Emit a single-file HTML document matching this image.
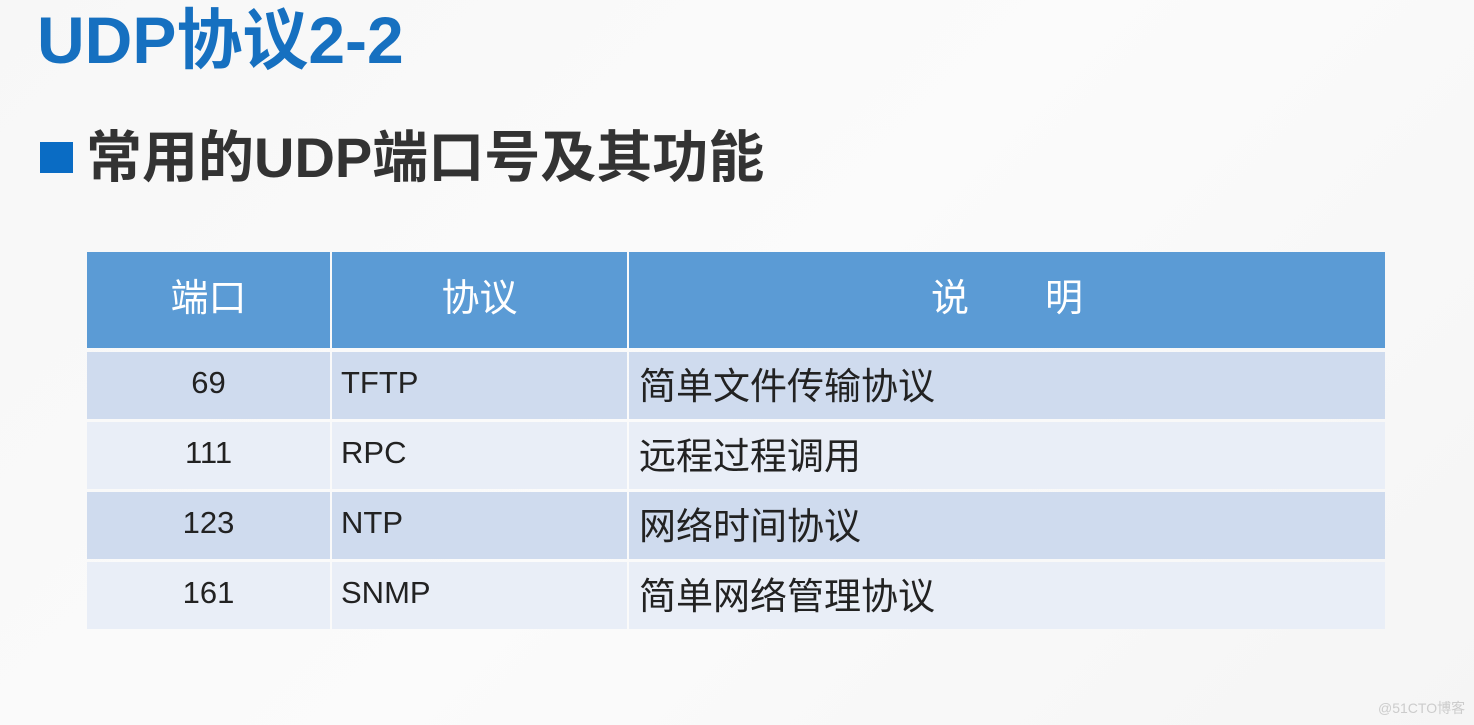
<!DOCTYPE html>
<html><head><meta charset="utf-8"><style>
body{margin:0;width:1474px;height:725px;background:linear-gradient(135deg,#f7f7f7,#fbfbfb 50%,#f5f5f5);position:relative;overflow:hidden;font-family:"Liberation Sans","Noto Sans CJK SC",sans-serif}
.t{position:absolute;left:37px;top:-2px;font-size:66px;font-weight:bold;color:#1670c0;white-space:nowrap;line-height:1.3}
.sq{position:absolute;left:40px;top:142px;width:33px;height:31px;background:#0a6cc4}
.s{position:absolute;left:86px;top:122px;font-size:56px;font-weight:bold;color:#333;white-space:nowrap;line-height:1.3}
.c{position:absolute;box-sizing:border-box;display:flex;align-items:center;font-size:31px;color:#222;white-space:nowrap;padding-bottom:6px}
.c span{font-size:37px}
.h{background:#5b9bd5;color:#fff;justify-content:center;font-size:38px;padding-bottom:12px}
.wm{position:absolute;left:1378px;top:698px;font-size:14px;color:#ccc}
</style></head><body>
<div class="t">UDP协议2-2</div>
<div class="sq"></div>
<div class="s">常用的UDP端口号及其功能</div>
<div class="c h" style="left:87px;top:252px;width:243px;height:96px">端口</div>
<div class="c h" style="left:332px;top:252px;width:295px;height:96px">协议</div>
<div class="c h" style="left:629px;top:252px;width:756px;height:96px">说&emsp;&emsp;明</div>

<div class="c" style="left:87px;top:352px;width:243px;height:67px;background:#cfdbee;justify-content:center">69</div>
<div class="c" style="left:332px;top:352px;width:295px;height:67px;background:#cfdbee;padding-left:9px">TFTP</div>
<div class="c" style="left:629px;top:352px;width:756px;height:67px;background:#cfdbee;padding-left:10px"><span>简单文件传输协议</span></div>

<div class="c" style="left:87px;top:422px;width:243px;height:67px;background:#e9eef7;justify-content:center">111</div>
<div class="c" style="left:332px;top:422px;width:295px;height:67px;background:#e9eef7;padding-left:9px">RPC</div>
<div class="c" style="left:629px;top:422px;width:756px;height:67px;background:#e9eef7;padding-left:10px"><span>远程过程调用</span></div>

<div class="c" style="left:87px;top:492px;width:243px;height:67px;background:#cfdbee;justify-content:center">123</div>
<div class="c" style="left:332px;top:492px;width:295px;height:67px;background:#cfdbee;padding-left:9px">NTP</div>
<div class="c" style="left:629px;top:492px;width:756px;height:67px;background:#cfdbee;padding-left:10px"><span>网络时间协议</span></div>

<div class="c" style="left:87px;top:562px;width:243px;height:67px;background:#e9eef7;justify-content:center">161</div>
<div class="c" style="left:332px;top:562px;width:295px;height:67px;background:#e9eef7;padding-left:9px">SNMP</div>
<div class="c" style="left:629px;top:562px;width:756px;height:67px;background:#e9eef7;padding-left:10px"><span>简单网络管理协议</span></div>
<div class="wm">@51CTO博客</div>
</body></html>
